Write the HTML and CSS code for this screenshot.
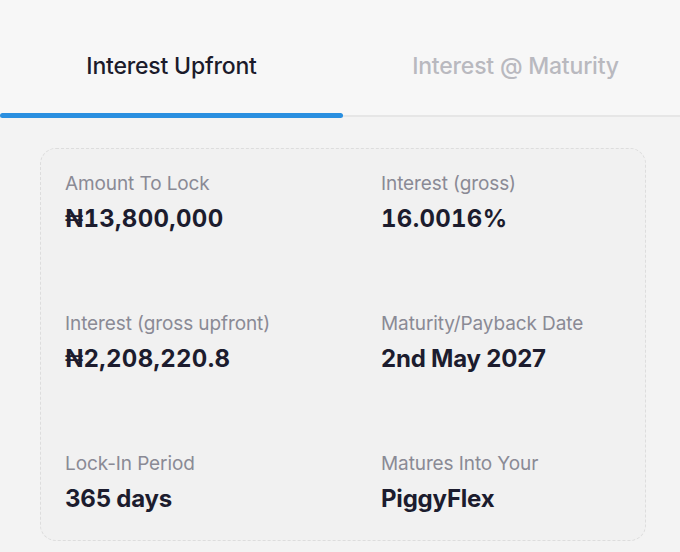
FILE: index.html
```html
<!DOCTYPE html>
<html>
<head>
<meta charset="utf-8">
<link rel="stylesheet" href="styles.css">
</head>
<body>
<div class="tabs">
  <div class="tab active">Interest Upfront</div>
  <div class="tab">Interest @ Maturity</div>
</div>
<div class="content">
  <div class="card">
    <div class="item"><div class="label">Amount To Lock</div><div class="value num">₦13,800,000</div></div>
    <div class="item"><div class="label">Interest (gross)</div><div class="value num">16.0016%</div></div>
    <div class="item"><div class="label">Interest (gross upfront)</div><div class="value num">₦2,208,220.8</div></div>
    <div class="item"><div class="label">Maturity/Payback Date</div><div class="value">2nd May 2027</div></div>
    <div class="item"><div class="label">Lock-In Period</div><div class="value">365 days</div></div>
    <div class="item"><div class="label">Matures Into Your</div><div class="value">PiggyFlex</div></div>
  </div>
</div>
</body>
</html>
```
FILE: styles.css
```css
* { box-sizing: border-box; }
html, body { margin: 0; padding: 0; }
body {
  width: 680px;
  height: 552px;
  background: #f3f3f3;
  font-family: Inter, "Noto Sans", sans-serif;
  overflow: hidden;
}
.tabs {
  display: flex;
  background: #f7f7f7;
  border-bottom: 2px solid #e6e6e6;
  height: 117px;
}
.tab {
  flex: 0 0 343px;
  display: flex;
  align-items: flex-start;
  justify-content: center;
  padding-top: 52px;
  font-size: 23px;
  font-weight: 500;
  letter-spacing: -0.2px;
  color: #b9b9bf;
  position: relative;
}
.tab + .tab { flex: 1; padding-left: 8px; }
.tab.active { color: #1b1b2b; }
.tab.active::after {
  content: "";
  position: absolute;
  left: 0;
  right: 0;
  bottom: -3px;
  height: 5px;
  border-radius: 3px;
  background: #2a8fe0;
}
.content {
  padding: 31px 34px 0 40px;
}
.card {
  border: 1.5px dashed #dddddd;
  border-radius: 16px;
  background: #f1f1f1;
  height: 393px;
  display: grid;
  grid-template-columns: 316px 1fr;
  grid-template-rows: 140px 140px 1fr;
  padding: 23px 0 0 24px;
}
.label {
  font-size: 19px;
  color: #8a8a95;
  line-height: 24px;
  letter-spacing: -0.1px;
}
.value {
  margin-top: 8px;
  font-size: 24px;
  font-weight: 700;
  color: #1c1c2e;
  line-height: 30px;
  letter-spacing: -0.2px;
}
.value.num {
  font-variant-numeric: tabular-nums;
  letter-spacing: 0.3px;
}
```
